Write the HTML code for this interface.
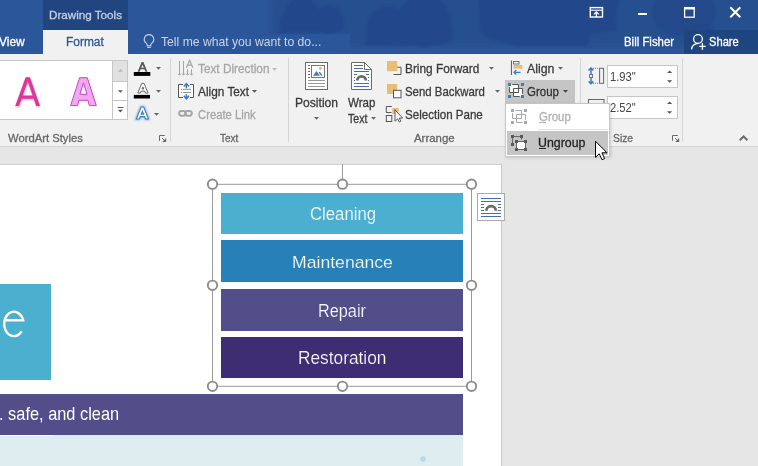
<!DOCTYPE html>
<html><head><meta charset="utf-8"><style>
html,body{margin:0;padding:0}
body{width:758px;height:466px;overflow:hidden;position:relative;font-family:"Liberation Sans", sans-serif;background:#fff}
.t{position:absolute;line-height:1;white-space:nowrap;transform-origin:0 0}
svg{overflow:visible}
</style></head><body>
<div style="position:absolute;left:0px;top:0px;width:758px;height:54px;background:#2b579a"></div>
<svg style="position:absolute;left:0px;top:0px;" width="758" height="54" viewBox="0 0 758 54">
<defs><filter id="bl" x="-10%" y="-30%" width="120%" height="160%"><feGaussianBlur stdDeviation="0.8"/></filter>
<filter id="bl2" x="-10%" y="-30%" width="120%" height="160%"><feGaussianBlur stdDeviation="3"/></filter></defs>
<g filter="url(#bl2)" fill="#27508f">
<rect x="270" y="-5" width="500" height="52" rx="6"/>
</g>
<g filter="url(#bl)" fill="#22478a">
<circle cx="302" cy="15" r="17"/>
<circle cx="329" cy="20" r="14"/>
<rect x="280" y="14" width="64" height="18" rx="8"/>
<path d="M282 26L278 34L292 31Z"/>
<circle cx="388" cy="26" r="20"/>
<circle cx="424" cy="21" r="26"/>
<rect x="366" y="20" width="86" height="25" rx="10"/>
<path d="M368 38L364 46L380 44Z"/>
<path d="M478 -4H622Q612 14 618 30L590 34 588 46H520Q484 40 480 30Z"/>
<ellipse cx="684" cy="12" rx="32" ry="24" opacity="0.75"/><circle cx="703" cy="36" r="12" opacity="0.75"/>
</g></svg>
<div style="position:absolute;left:43px;top:0px;width:85px;height:30px;background:#21467f"></div>
<div class="t" style="left:48.71px;top:10.00px;font-size:11.8px;color:#c3d0e6;-webkit-text-stroke:0.3px #c3d0e6;transform:scale(0.9877,1.0);">Drawing Tools</div>
<div class="t" style="left:-1.00px;top:36.00px;font-size:12.5px;color:#ffffff;-webkit-text-stroke:0.3px #ffffff;transform:scale(0.9593,1.0);">View</div>
<div style="position:absolute;left:43px;top:30px;width:85px;height:24px;background:#f1f1f1"></div>
<div class="t" style="left:65.65px;top:36.00px;font-size:12.5px;color:#2b579a;-webkit-text-stroke:0.3px #2b579a;transform:scale(0.9538,1.0);">Format</div>
<div style="position:absolute;left:128px;top:34px;width:222px;height:20px;background:#2b579a"></div>
<svg style="position:absolute;left:142px;top:33px;" width="14" height="16" viewBox="0 0 14 16"><path d="M7 1.6a4.7 4.7 0 0 0-2.8 8.5c.6.5 1 1.1 1 1.9v.8h3.6v-.8c0-.8.4-1.4 1-1.9A4.7 4.7 0 0 0 7 1.6z" fill="none" stroke="#c9d4e7" stroke-width="1.1"/><path d="M5.2 14.3h3.6" stroke="#c9d4e7" stroke-width="1.2"/></svg>
<div class="t" style="left:160.70px;top:35.00px;font-size:13px;color:#c9d4e7;transform:scale(0.9359,1.0);-webkit-text-stroke:0">Tell me what you want to do...</div>
<svg style="position:absolute;left:588px;top:5px;" width="16" height="14" viewBox="0 0 16 14"><rect x="2.3" y="2.6" width="12.2" height="9.4" fill="none" stroke="#fff" stroke-width="1.4"/><path d="M2 5.2h12.5" stroke="#fff" stroke-width="1.1"/><path d="M8.4 12V7M5.9 9.4l2.5-2.5 2.5 2.5" fill="none" stroke="#fff" stroke-width="1.3"/></svg>
<div style="position:absolute;left:638px;top:13px;width:9px;height:2px;background:#fff"></div>
<svg style="position:absolute;left:683px;top:6px;" width="13" height="13" viewBox="0 0 13 13"><rect x="1.6" y="1.6" width="9.6" height="9.6" fill="none" stroke="#fff" stroke-width="1.3"/><path d="M1 2.4h10.8" stroke="#fff" stroke-width="2.2"/></svg>
<svg style="position:absolute;left:729px;top:6px;" width="13" height="13" viewBox="0 0 13 13"><path d="M1.3 1.3L11.3 11.3M11.3 1.3L1.3 11.3" stroke="#fff" stroke-width="2"/></svg>
<div class="t" style="left:623.66px;top:36.00px;font-size:12.1px;color:#ffffff;-webkit-text-stroke:0.3px #ffffff;transform:scale(0.9442,1.0);">Bill Fisher</div>
<div style="position:absolute;left:684px;top:30px;width:74px;height:24px;background:#1e4580"></div>
<svg style="position:absolute;left:689px;top:33px;" width="20" height="19" viewBox="0 0 20 19"><circle cx="9" cy="6" r="4.4" fill="none" stroke="#fff" stroke-width="1.35"/><path d="M2.5 16.4C3 12.6 5.6 10.5 9.6 10.4" fill="none" stroke="#fff" stroke-width="1.35"/><path d="M13.4 10.1v6.6M10.1 13.4h6.6" stroke="#fff" stroke-width="1.35"/></svg>
<div class="t" style="left:709.18px;top:36.00px;font-size:12.1px;color:#ffffff;-webkit-text-stroke:0.3px #ffffff;transform:scale(0.9226,1.0);">Share</div>
<div style="position:absolute;left:0px;top:54px;width:758px;height:92px;background:#f1f1f1"></div>
<div style="position:absolute;left:0px;top:146px;width:758px;height:1px;background:#d5d5d5"></div>
<div style="position:absolute;left:-1px;top:60px;width:114px;height:60px;background:#fff;border:1px solid #c6c6c6;box-sizing:border-box"></div>
<div style="position:absolute;left:112px;top:60px;width:16px;height:60px;background:#fff;border:1px solid #c6c6c6;box-sizing:border-box"></div>
<div style="position:absolute;left:113px;top:61px;width:14px;height:21px;background:#e1e1e1"></div>
<div style="position:absolute;left:113px;top:81px;width:14px;height:1px;background:#c6c6c6"></div>
<div style="position:absolute;left:113px;top:100px;width:14px;height:1px;background:#c6c6c6"></div>
<svg style="position:absolute;left:113px;top:60px;" width="15" height="60" viewBox="0 0 15 60"><path d="M4.8 11.7l2.6-2.6 2.6 2.6z" fill="#b9b9b9"/><path d="M4.9 30.3h5l-2.5 2.5z" fill="#595959"/><path d="M4.6 47.5h5.8" stroke="#595959" stroke-width="1"/><path d="M4.9 49.8h5l-2.5 2.6z" fill="#595959"/></svg>
<svg style="position:absolute;left:0px;top:0px;" width="110" height="120" viewBox="0 0 110 120">
<defs><filter id="sh" x="-20%" y="-20%" width="140%" height="140%"><feGaussianBlur stdDeviation="0.9"/></filter></defs>
<path d="M15.2 106L25.6 77.2L29.9 77.2L40 106L36.2 106L33.7 98.7L21.6 98.7L19 106ZM22.7 95.6L27.77 81.6L32.6 95.6Z" transform="translate(0.6,1.2)" fill="#000" opacity="0.28" filter="url(#sh)" fill-rule="evenodd"/>
<path d="M15.2 106L25.6 77.2L29.9 77.2L40 106L36.2 106L33.7 98.7L21.6 98.7L19 106ZM22.7 95.6L27.77 81.6L32.6 95.6Z" fill="#e0359b" fill-rule="evenodd"/>
<path d="M70.6 105.6L79.6 77.7L87.3 77.7L96.3 105.6L89.3 105.6L88 100.3L79 100.3L77.6 105.6ZM79.9 94.3L83.45 82.8L87 94.3Z" fill="#efa9ef" stroke="#d23dcb" stroke-width="1" fill-rule="evenodd" stroke-linejoin="round"/>
</svg>
<svg style="position:absolute;left:0px;top:0px;" width="170" height="125" viewBox="0 0 170 125">
<defs><filter id="gl" x="-30%" y="-30%" width="160%" height="160%"><feGaussianBlur stdDeviation="0.8"/></filter></defs>
<path d="M137.60,71.70 L141.60,62.10 L143.40,62.10 L147.40,71.70 L145.40,71.70 L144.36,69.20 L140.64,69.20 L139.60,71.70 Z M141.20,67.86 L142.50,64.74 L143.80,67.86 Z" fill="#595959" fill-rule="evenodd"/>
<rect x="133.8" y="72" width="16.5" height="3.9" fill="#000"/>
<path d="M137.80,93.00 L141.70,83.40 L144.10,83.40 L148.00,93.00 L145.40,93.00 L144.62,91.08 L141.18,91.08 L140.40,93.00 Z M142.04,88.97 L142.90,86.85 L143.76,88.97 Z" fill="#fff" stroke="#595959" stroke-width="0.9" fill-rule="evenodd"/>
<rect x="133.8" y="94.9" width="16.2" height="3.6" fill="#000"/>
<path d="M136.30,119.00 L141.10,107.00 L143.70,107.00 L148.50,119.00 L145.50,119.00 L144.54,116.60 L140.26,116.60 L139.30,119.00 Z M141.22,114.20 L142.40,111.25 L143.58,114.20 Z" fill="none" stroke="#8fb6e3" stroke-width="2.4" fill-rule="evenodd" filter="url(#gl)"/>
<path d="M136.30,119.00 L141.10,107.00 L143.70,107.00 L148.50,119.00 L145.50,119.00 L144.54,116.60 L140.26,116.60 L139.30,119.00 Z M141.22,114.20 L142.40,111.25 L143.58,114.20 Z" fill="#fff" stroke="#3f7bc1" stroke-width="1.1" fill-rule="evenodd"/>
</svg>
<svg style="position:absolute;left:156px;top:67px;" width="7" height="4" viewBox="0 0 7 4"><path d="M0 0h5l-2.5 2.7z" fill="#666"/></svg>
<svg style="position:absolute;left:156px;top:90.3px;" width="7" height="4" viewBox="0 0 7 4"><path d="M0 0h5l-2.5 2.7z" fill="#666"/></svg>
<svg style="position:absolute;left:154px;top:113px;" width="7" height="4" viewBox="0 0 7 4"><path d="M0 0h5l-2.5 2.7z" fill="#666"/></svg>
<div style="position:absolute;left:170px;top:58px;width:1px;height:84px;background:#d5d5d5"></div>
<div class="t" style="left:8.30px;top:132.00px;font-size:11.6px;color:#666666;-webkit-text-stroke:0.3px #666666;transform:scale(0.9714,1.0);">WordArt Styles</div>
<svg style="position:absolute;left:158px;top:134px;" width="9" height="9" viewBox="0 0 9 9"><path d="M1.5 6.9V1.5H6.8" fill="none" stroke="#6a6a6a" stroke-width="1"/><path d="M8.2 4V8H4.2Z" fill="#666"/><path d="M4 4L6.3 6.3" stroke="#777" stroke-width="1"/></svg>
<svg style="position:absolute;left:176px;top:58px;" width="20" height="20" viewBox="0 0 20 20">
<g stroke="#a6a6a6" stroke-width="1" fill="none">
<path d="M3.5 3v14M7.5 3v14M11.5 11.2v5.8M15.5 11.2v5.8"/>
<path d="M2 15.6l1.5 1.6 1.5-1.6M6 15.6l1.5 1.6 1.5-1.6M10 15.6l1.5 1.6 1.5-1.6M14 15.6l1.5 1.6 1.5-1.6"/>
<path d="M10.4 9.7L13.65 2.3l3.25 7.4M11.6 7.2h4.1" stroke-width="1.2"/>
</g></svg>
<svg style="position:absolute;left:176px;top:82px;" width="20" height="18" viewBox="0 0 20 18">
<rect x="2.5" y="2.5" width="15" height="13" fill="#fff"/>
<path d="M7 2.5H2.5V15.5H7M14 2.5H17.5V15.5H14" fill="none" stroke="#555" stroke-width="1"/>
<path d="M5 7.3h1M5 10.4h1" stroke="#777" stroke-width="1"/>
<path d="M7 7.3h8M7 10.4h8" stroke="#8a8a8a" stroke-width="1"/>
<path d="M10.4 1.8v4.4M10.4 16.6v-4.4" stroke="#3d7bc6" stroke-width="1.6"/>
<path d="M7.8 4.6L10.4 1.6l2.6 3M7.8 13.8l2.6 3 2.6-3" fill="none" stroke="#3d7bc6" stroke-width="1.6"/>
</svg>
<svg style="position:absolute;left:176px;top:106px;" width="20" height="14" viewBox="0 0 20 14">
<g fill="none" stroke="#a6a6a6" stroke-width="2">
<rect x="3.1" y="4.9" width="6.6" height="4.9" rx="2.45"/>
<rect x="9.2" y="4.9" width="6.6" height="4.9" rx="2.45"/>
</g></svg>
<div class="t" style="left:197.70px;top:63.00px;font-size:12.5px;color:#a6a6a6;-webkit-text-stroke:0.3px #a6a6a6;transform:scale(0.9440,1.0);">Text Direction</div>
<svg style="position:absolute;left:272.2px;top:67.5px;" width="7" height="4" viewBox="0 0 7 4"><path d="M0 0h5l-2.5 2.7z" fill="#b8b8b8"/></svg>
<div class="t" style="left:197.50px;top:86.00px;font-size:12.5px;color:#3b3b3b;-webkit-text-stroke:0.3px #3b3b3b;transform:scale(0.9463,1.0);">Align Text</div>
<svg style="position:absolute;left:252.2px;top:90.4px;" width="7" height="4" viewBox="0 0 7 4"><path d="M0 0h5l-2.5 2.7z" fill="#555"/></svg>
<div class="t" style="left:197.70px;top:109.00px;font-size:12.5px;color:#a6a6a6;-webkit-text-stroke:0.3px #a6a6a6;transform:scale(0.9016,1.0);">Create Link</div>
<div class="t" style="left:220.00px;top:132.00px;font-size:11.6px;color:#666666;-webkit-text-stroke:0.3px #666666;transform:scale(0.8591,1.0);">Text</div>
<div style="position:absolute;left:288px;top:58px;width:1px;height:84px;background:#d5d5d5"></div>
<svg style="position:absolute;left:304px;top:61px;" width="26" height="30" viewBox="0 0 26 30">
<rect x="1.5" y="1.5" width="22" height="27" fill="#fff" stroke="#6a6a6a" stroke-width="1"/>
<path d="M4 4.5h2M4 7.5h2M4 10.5h2M4 13.5h2M4 16.5h2" stroke="#6a6a6a" stroke-width="1"/>
<rect x="7.5" y="4.5" width="13" height="12" fill="#fff" stroke="#777" stroke-width="1"/>
<path d="M9 14.8l3.4-4.8 3.6 4.8z" fill="#3f7bbf"/>
<path d="M14.6 11.6l1.3-.8 2.8 4H17z" fill="#3f7bbf"/>
<circle cx="16.4" cy="7.2" r="1.5" fill="#eab964"/>
<path d="M4 19.5h17M4 22.5h17M4 25.5h17" stroke="#999" stroke-width="1"/>
</svg>
<div class="t" style="left:294.55px;top:97.00px;font-size:12.7px;color:#3b3b3b;-webkit-text-stroke:0.3px #3b3b3b;transform:scale(0.9545,1.0);">Position</div>
<svg style="position:absolute;left:314px;top:117.2px;" width="7" height="4" viewBox="0 0 7 4"><path d="M0 0h5l-2.5 2.7z" fill="#666"/></svg>
<svg style="position:absolute;left:350px;top:61px;" width="24" height="30" viewBox="0 0 24 30">
<path d="M1.5 1.5H14.5L21.5 8.5V28.5H1.5Z" fill="#fff" stroke="#6a6a6a" stroke-width="1"/>
<path d="M14.5 1.5V8.5H21.5" fill="none" stroke="#6a6a6a" stroke-width="1"/>
<path d="M4 4.5h9M4 7.5h9M4 10.5h15M4 22.5h15M4 25.5h15M4 13.5h3M16 13.5h3M4 16.5h1M18 16.5h1M4 19.5h1M18 19.5h1" stroke="#3f70b6" stroke-width="1"/>
<path d="M7.25 19.6A4.3 4.3 0 0 1 15.85 19.6" fill="none" stroke="#6a6a6a" stroke-width="2.7"/>
</svg>
<div class="t" style="left:348.30px;top:97.00px;font-size:12.7px;color:#3b3b3b;-webkit-text-stroke:0.3px #3b3b3b;transform:scale(0.9100,1.0);">Wrap</div>
<div class="t" style="left:347.50px;top:113.00px;font-size:12.7px;color:#3b3b3b;-webkit-text-stroke:0.3px #3b3b3b;transform:scale(0.8333,1.0);">Text</div>
<svg style="position:absolute;left:371.2px;top:117.2px;" width="7" height="4" viewBox="0 0 7 4"><path d="M0 0h5l-2.5 2.7z" fill="#666"/></svg>
<svg style="position:absolute;left:384px;top:58px;" width="20" height="66" viewBox="0 0 20 66">
<rect x="3" y="3" width="10.2" height="10.2" fill="#e8bd74"/>
<path d="M9.5 16.5h7.5V9.2h-3.8" fill="none" stroke="#555" stroke-width="1"/>
<rect x="3" y="26" width="10.2" height="10" fill="#e8bd74"/>
<rect x="9.5" y="32.3" width="7.5" height="7.5" fill="#fff" stroke="#555" stroke-width="1"/>
<path d="M7.5 54.5H2.3v-6h5.5" fill="none" stroke="#555" stroke-width="1"/>
<rect x="8.3" y="50" width="6.3" height="6" fill="#e8bd74"/>
<rect x="2.3" y="57.5" width="5.5" height="6" fill="none" stroke="#555" stroke-width="1"/>
<path d="M11 51.8v11.4l2.6-2.4 1.7 3.2 1.5-.8-1.6-3.1h3.4z" fill="#fff" stroke="#444" stroke-width="0.9"/>
</svg>
<div class="t" style="left:404.89px;top:62.00px;font-size:13px;color:#3b3b3b;-webkit-text-stroke:0.3px #3b3b3b;transform:scale(0.9100,1.0);">Bring Forward</div>
<svg style="position:absolute;left:489px;top:67.3px;" width="7" height="4" viewBox="0 0 7 4"><path d="M0 0h5l-2.5 2.7z" fill="#666"/></svg>
<div class="t" style="left:404.72px;top:85.00px;font-size:13px;color:#3b3b3b;-webkit-text-stroke:0.3px #3b3b3b;transform:scale(0.8778,1.0);">Send Backward</div>
<svg style="position:absolute;left:495px;top:90.3px;" width="7" height="4" viewBox="0 0 7 4"><path d="M0 0h5l-2.5 2.7z" fill="#666"/></svg>
<div class="t" style="left:404.61px;top:108.00px;font-size:13px;color:#3b3b3b;-webkit-text-stroke:0.3px #3b3b3b;transform:scale(0.8895,1.0);">Selection Pane</div>
<div class="t" style="left:414.10px;top:132.00px;font-size:11.6px;color:#666666;-webkit-text-stroke:0.3px #666666;transform:scale(0.9854,1.0);">Arrange</div>
<svg style="position:absolute;left:508px;top:58px;" width="18" height="20" viewBox="0 0 18 20">
<path d="M3.4 2.5v14.5" stroke="#555" stroke-width="1"/>
<rect x="5.5" y="3.5" width="5.5" height="2.5" fill="none" stroke="#666" stroke-width="0.9"/>
<rect x="5.5" y="7" width="9" height="3.6" fill="#e8bd74"/>
<path d="M12.5 14.3H6M8.3 12L6 14.3l2.3 2.3" fill="none" stroke="#3a7bc8" stroke-width="1.3"/>
</svg>
<div class="t" style="left:527.00px;top:62.00px;font-size:13px;color:#3b3b3b;-webkit-text-stroke:0.3px #3b3b3b;transform:scale(0.9483,1.0);">Align</div>
<svg style="position:absolute;left:558.2px;top:67.3px;" width="7" height="4" viewBox="0 0 7 4"><path d="M0 0h5l-2.5 2.7z" fill="#666"/></svg>
<div style="position:absolute;left:505px;top:80px;width:70px;height:23px;background:#c5c5c5"></div>
<svg style="position:absolute;left:505px;top:80px;" width="22" height="20" viewBox="0 0 22 20">
<path d="M4.5 4.5H13.5V12.5H4.5Z" fill="#fff"/><path d="M8.5 8.5H17.5V16.5H8.5Z" fill="#fff"/>
<path d="M7.3 4.5H13.5V12.5H4.5V7.1" fill="none" stroke="#555" stroke-width="1"/>
<path d="M14.7 16.5H8.5V8.5H17.5V13.8" fill="none" stroke="#555" stroke-width="1"/>
<g fill="#3f7cc4"><rect x="3" y="3" width="3" height="3"/><rect x="16" y="3" width="3" height="3"/><rect x="3" y="15" width="3" height="3"/><rect x="16" y="15" width="3" height="3"/></g>
</svg>
<div class="t" style="left:527.40px;top:85.00px;font-size:13px;color:#333333;-webkit-text-stroke:0.3px #333333;transform:scale(0.8833,1.0);">Group</div>
<svg style="position:absolute;left:563.1px;top:90.2px;" width="7" height="4" viewBox="0 0 7 4"><path d="M0 0h5l-2.5 2.7z" fill="#444"/></svg>
<div style="position:absolute;left:580px;top:58px;width:1px;height:84px;background:#d5d5d5"></div>
<svg style="position:absolute;left:586px;top:64px;" width="20" height="24" viewBox="0 0 20 24">
<path d="M5 4v6M2.6 6.4L5 4l2.4 2.4" fill="none" stroke="#3a7bc8" stroke-width="1.5"/>
<path d="M5 19.8v-6M2.6 17.4L5 19.8l2.4-2.4" fill="none" stroke="#3a7bc8" stroke-width="1.5"/>
<rect x="3.6" y="10.5" width="3" height="3" fill="none" stroke="#666" stroke-width="0.9"/>
<path d="M7 4.3h6M7 19.3h6" stroke="#666" stroke-width="0.9" stroke-dasharray="1 1"/>
<rect x="13.6" y="4.3" width="4" height="15" fill="none" stroke="#666" stroke-width="1"/>
</svg>
<div style="position:absolute;left:607px;top:65px;width:71px;height:23px;background:#fff;border:1px solid #c6c6c6;box-sizing:border-box"></div>
<div class="t" style="left:609.88px;top:71.00px;font-size:12.2px;color:#444444;transform:scale(0.9185,1.0);-webkit-text-stroke:0">1.93&quot;</div>
<svg style="position:absolute;left:664px;top:68px;" width="10" height="17" viewBox="0 0 10 17"><path d="M3 5l2.6-2.5 2.6 2.5z" fill="#555"/><path d="M3 12.2h5.2l-2.6 2.6z" fill="#555"/></svg>
<svg style="position:absolute;left:586px;top:96px;" width="20" height="10" viewBox="0 0 20 10"><rect x="2.5" y="3.5" width="15.5" height="8" fill="none" stroke="#666" stroke-width="1"/></svg>
<div style="position:absolute;left:607px;top:96px;width:71px;height:23px;background:#fff;border:1px solid #c6c6c6;box-sizing:border-box"></div>
<div class="t" style="left:609.88px;top:102.00px;font-size:12.2px;color:#444444;transform:scale(0.9185,1.0);-webkit-text-stroke:0">2.52&quot;</div>
<svg style="position:absolute;left:664px;top:99px;" width="10" height="17" viewBox="0 0 10 17"><path d="M3 5l2.6-2.5 2.6 2.5z" fill="#555"/><path d="M3 12.2h5.2l-2.6 2.6z" fill="#555"/></svg>
<div class="t" style="left:613.00px;top:132.00px;font-size:11.6px;color:#666666;-webkit-text-stroke:0.3px #666666;transform:scale(0.8909,1.0);">Size</div>
<svg style="position:absolute;left:671px;top:134px;" width="9" height="9" viewBox="0 0 9 9"><path d="M1.5 6.9V1.5H6.8" fill="none" stroke="#6a6a6a" stroke-width="1"/><path d="M8.2 4V8H4.2Z" fill="#666"/><path d="M4 4L6.3 6.3" stroke="#777" stroke-width="1"/></svg>
<div style="position:absolute;left:682px;top:58px;width:1px;height:84px;background:#d5d5d5"></div>
<svg style="position:absolute;left:738px;top:133px;" width="12" height="9" viewBox="0 0 12 9"><path d="M1.8 7.3L5.6 3.4L9.4 7.3" fill="none" stroke="#6a6a6a" stroke-width="2"/></svg>
<div style="position:absolute;left:0px;top:147px;width:758px;height:319px;background:#e6e6e6"></div>
<div style="position:absolute;left:0px;top:164px;width:501px;height:302px;background:#fff;border-top:1px solid #cfcfcf;box-sizing:border-box"></div>
<div style="position:absolute;left:501px;top:164px;width:1px;height:302px;background:#c8c8c8"></div>
<svg style="position:absolute;left:205px;top:162px;" width="275" height="232" viewBox="0 0 275 232">
<path d="M137.5 2v20" stroke="#999" stroke-width="1"/>
<rect x="7.5" y="22.3" width="259" height="202" fill="none" stroke="#999" stroke-width="1"/>
</svg>
<div style="position:absolute;left:221px;top:193px;width:242px;height:41px;background:#4bb0d0"></div>
<div style="position:absolute;left:221px;top:240px;width:242px;height:42px;background:#2880b9"></div>
<div style="position:absolute;left:221px;top:289px;width:242px;height:41.5px;background:#524e8a"></div>
<div style="position:absolute;left:221px;top:337px;width:242px;height:41px;background:#3d2d72"></div>
<div class="t" style="left:309.54px;top:206.00px;font-size:17.5px;color:#ffffff;transform:scale(0.9567,1.0);-webkit-text-stroke:0.2px #4bb0d0">Cleaning</div>
<div class="t" style="left:292.46px;top:254.00px;font-size:17px;color:#ffffff;transform:scale(1.0365,1.0);-webkit-text-stroke:0.2px #2880b9">Maintenance</div>
<div class="t" style="left:317.67px;top:303.00px;font-size:17.5px;color:#ffffff;transform:scale(0.9294,1.0);-webkit-text-stroke:0.2px #524e8a">Repair</div>
<div class="t" style="left:298.31px;top:350.00px;font-size:17.5px;color:#ffffff;transform:scale(0.9875,1.0);-webkit-text-stroke:0.2px #3d2d72">Restoration</div>
<svg style="position:absolute;left:200px;top:170px;" width="290" height="230" viewBox="0 0 290 230"><circle cx="12.5" cy="14.199999999999989" r="4.7" fill="#fff" stroke="#8c8c8c" stroke-width="1.9"/><circle cx="12.5" cy="115.30000000000001" r="4.7" fill="#fff" stroke="#8c8c8c" stroke-width="1.9"/><circle cx="12.5" cy="216.3" r="4.7" fill="#fff" stroke="#8c8c8c" stroke-width="1.9"/><circle cx="142.5" cy="14.199999999999989" r="4.7" fill="#fff" stroke="#8c8c8c" stroke-width="1.9"/><circle cx="142.5" cy="216.3" r="4.7" fill="#fff" stroke="#8c8c8c" stroke-width="1.9"/><circle cx="271.5" cy="14.199999999999989" r="4.7" fill="#fff" stroke="#8c8c8c" stroke-width="1.9"/><circle cx="271.5" cy="115.30000000000001" r="4.7" fill="#fff" stroke="#8c8c8c" stroke-width="1.9"/><circle cx="271.5" cy="216.3" r="4.7" fill="#fff" stroke="#8c8c8c" stroke-width="1.9"/></svg>
<div style="position:absolute;left:477px;top:193px;width:28px;height:28px;background:#fff;border:1px solid #aaa;box-sizing:border-box"></div>
<svg style="position:absolute;left:477px;top:193px;" width="28" height="28" viewBox="0 0 28 28">
<g stroke="#3f6fb5" stroke-width="1.1">
<path d="M4 5.5h20M4 8.5h20M4 20.5h20M4 23.5h20"/>
<path d="M4 11.5h3M21 11.5h3M4 14.5h3M21 14.5h3M4 17.5h3M21 17.5h3"/>
</g>
<path d="M9.4 17.8A4.7 4.7 0 0 1 18.8 17.8" fill="none" stroke="#6a6a6a" stroke-width="2.8"/>
</svg>
<div style="position:absolute;left:0px;top:284px;width:51px;height:96px;background:#4bb0d0"></div>
<svg style="position:absolute;left:0px;top:284px;overflow:hidden" width="51" height="96" viewBox="0 0 51 96"><path d="M4.2 36.3H23.2A9.7 12.2 0 1 0 21.6 47.4" fill="none" stroke="#fff" stroke-width="2.4"/></svg>
<div style="position:absolute;left:0px;top:394px;width:463px;height:41px;background:#524e8a"></div>
<div class="t" style="left:-1.42px;top:404.00px;font-size:19px;color:#ffffff;transform:scale(0.8618,1.0);">. safe, and clean</div>
<div style="position:absolute;left:0px;top:435px;width:463px;height:31px;background:#deedef"></div>
<div style="position:absolute;left:0px;top:435px;width:54px;height:1px;background:#fbfdfd"></div>
<svg style="position:absolute;left:418px;top:454px;" width="10" height="10" viewBox="0 0 10 10"><circle cx="5" cy="5" r="2.8" fill="#b3dbe6"/></svg>
<div style="position:absolute;left:505px;top:103px;width:105px;height:54px;background:#fff;border:1px solid #c6c6c6;box-sizing:border-box;box-shadow:1px 1px 3px rgba(0,0,0,0.15)"></div>
<div style="position:absolute;left:538px;top:129px;width:70px;height:1px;background:#e1e1e1"></div>
<div style="position:absolute;left:507px;top:131px;width:101px;height:24px;background:#c5c5c5"></div>
<svg style="position:absolute;left:508px;top:106px;" width="22" height="20" viewBox="0 0 22 20">
<path d="M4.5 4.5H13.5V12.5H4.5Z" fill="#fdfafd"/><path d="M8.5 8.5H17.5V16.5H8.5Z" fill="#fdfafd"/>
<path d="M7.3 4.5H13.5V12.5H4.5V7.1" fill="none" stroke="#a8a8a8" stroke-width="1"/>
<path d="M14.7 16.5H8.5V8.5H17.5V13.8" fill="none" stroke="#a8a8a8" stroke-width="1"/>
<g fill="#a8a8a8"><rect x="3" y="3" width="3" height="3"/><rect x="16" y="3" width="3" height="3"/><rect x="3" y="15" width="3" height="3"/><rect x="16" y="15" width="3" height="3"/></g>
</svg>
<div class="t" style="left:538.60px;top:111.00px;font-size:12px;color:#b1b1b1;-webkit-text-stroke:0.3px #b1b1b1;transform:scale(0.9515,1.0);">Group</div>
<div style="position:absolute;left:538.6px;top:121.6px;width:7.2px;height:1px;background:#b1b1b1"></div>
<svg style="position:absolute;left:508px;top:132px;" width="22" height="20" viewBox="0 0 22 20">
<path d="M4.5 12.5V4.5H13.5V7.5" fill="none" stroke="#666" stroke-width="1"/>
<rect x="8.5" y="9.5" width="9" height="8" fill="#fff" stroke="#666" stroke-width="1"/>
<g fill="#595959"><rect x="3" y="3" width="3" height="3"/><rect x="12" y="3" width="3" height="3"/><rect x="3" y="11" width="3" height="3"/>
<rect x="7" y="8" width="3" height="3"/><rect x="16" y="8" width="3" height="3"/><rect x="7" y="16" width="3" height="3"/><rect x="16" y="16" width="3" height="3"/></g>
</svg>
<div class="t" style="left:537.57px;top:137.00px;font-size:12px;color:#262626;-webkit-text-stroke:0.3px #262626;transform:scale(1.0311,1.0);">Ungroup</div>
<div style="position:absolute;left:538.6px;top:148px;width:7.4px;height:1px;background:#262626"></div>
<svg style="position:absolute;left:594px;top:140px;" width="16" height="22" viewBox="0 0 16 22"><path d="M1.5 1.2V17.4L5.2 13.8L8.1 19.7L10.6 18.6L8 12.8H13Z" fill="#fff" stroke="#000" stroke-width="1" stroke-linejoin="miter"/></svg>
</body></html>
